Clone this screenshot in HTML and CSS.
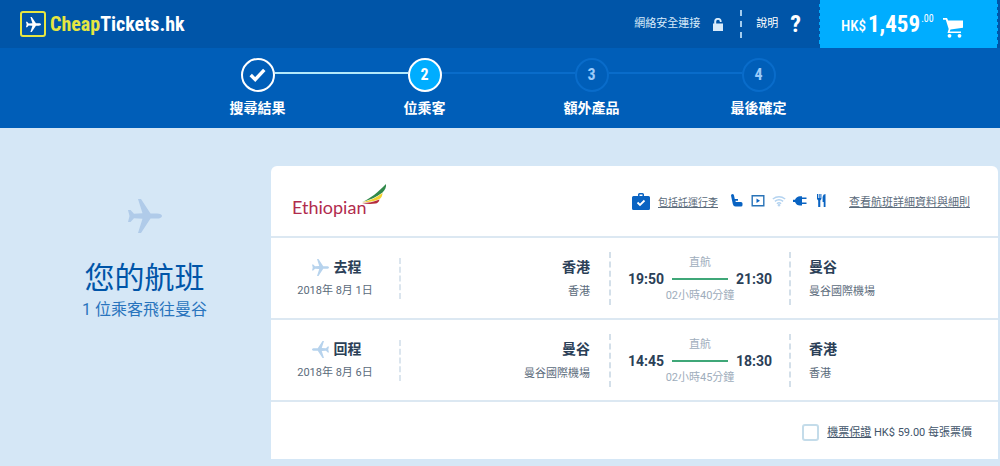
FILE: index.html
```
<!DOCTYPE html>
<html lang="zh-Hant">
<head>
<meta charset="utf-8">
<meta name="viewport" content="width=device-width, initial-scale=1">
<title>CheapTickets.hk</title>
<link rel="stylesheet" href="styles.css">
</head>
<body>
<svg class="sprite" aria-hidden="true">
  <symbol id="plane" viewBox="0 0 34 34"><path d="M34 17c0 1.500-2 2.600-5 2.600h-6.500L13 34h-3l4.500-14.200-8.500-.5L2.500 23H0l1.500-6L0 11h2.500L6 14.700l8.500-.5L10 0h3l9.500 14.400H29c3 0 5 1.100 5 2.600z"/></symbol>
</svg>
<header class="topbar">
  <a class="brand" href="#" aria-label="CheapTickets.hk">
    <span class="brand-mark"><svg><use href="#plane"/></svg></span>
    <span class="brand-name"><span class="brand-cheap">Cheap</span>Tickets.hk</span>
  </a>
  <div class="secure">
    <span>網絡安全連接</span>
    <svg class="lock" viewBox="0 0 10 13"><path d="M0 5.500h1.200V3.600a3.600 3.600 0 0 1 7.400 0V4H6.800v-.4a1.800 1.800 0 0 0-3.600 0v1.900H10V13H0z"/></svg>
  </div>
  <a class="help" href="#">說明 <span class="help-mark">?</span></a>
  <button class="cart" type="button">
    <span class="cart-currency">HK$</span><span class="cart-total">1,459</span><span class="cart-cents">.00</span>
    <svg class="cart-icon" viewBox="0 0 20 20"><path d="M0 0h4l1.200 2.500H20v7.200L7.500 11.500l-.8 2H18V15H4.500l1.200-4L2.800 1.800H0z"/><circle cx="6.500" cy="17.800" r="1.900"/><circle cx="16.500" cy="17.800" r="1.900"/></svg>
  </button>
</header>
<nav class="progress" aria-label="預訂步驟">
  <ol class="steps">
    <li class="step done"><span class="dot"><svg class="tick" viewBox="0 0 15 12"><path d="M1.500 6l4 4 8-8.500"/></svg></span><span>搜尋結果</span></li>
    <li class="step current"><span class="dot">2</span><span>位乘客</span></li>
    <li class="step"><span class="dot">3</span><span>額外產品</span></li>
    <li class="step"><span class="dot">4</span><span>最後確定</span></li>
  </ol>
</nav>
<main class="page">
  <section class="intro">
    <svg class="intro-plane"><use href="#plane"/></svg>
    <h1 class="intro-title">您的航班</h1>
    <p class="intro-sub">1 位乘客飛往曼谷</p>
  </section>
  <section class="card">
    <div class="card-head">
      <div class="airline">
        <span>Ethiopian</span>
        <svg class="airline-tail" viewBox="0 0 26 22"><path fill="#31894a" d="M1 18C9 15 17 8 25 0c.5 3-1 6-3.500 8.500C16 13 9 16 1 18z"/><path fill="#f3d22f" d="M1 18.500c8-2 15-5 20.500-9.500 0 2.500-1 5-3 6-5 2.500-11 3-17.500 3.500z"/><path fill="#b52b3c" d="M1 19c6 0 12-1 17.500-3.500-.5 2.500-2 3.800-4 4-5 .8-9 .5-13.500-.5z"/></svg>
      </div>
      <div class="baggage">
        <svg class="bag" viewBox="0 0 18 17"><path fill="#0963c2" fill-rule="evenodd" d="M6 3V1.500Q6 0 7.500 0h3Q12 0 12 1.500V3h4.500Q18 3 18 4.500v11q0 1.500-1.500 1.500h-15Q0 17 0 15.500v-11Q0 3 1.500 3zm1.500 0h3V1.500h-3z"/><path d="M5.500 9.500L8 12l4.500-4.500" fill="none" stroke="#fff" stroke-width="1.800"/></svg>
        <a href="#">包括託運行李</a>
      </div>
      <div class="amenities">
        <svg class="amenity" viewBox="0 0 14 14"><path d="M1 1.500Q1 0 2.500 0T4 1.500L4.800 5H8v1.800H5.400L5.800 8H11q1.500 0 1.500 1.500V11Q12.500 12.500 11 12.500H5.500Q3.500 12.500 2.800 10z"/></svg>
        <svg class="amenity" viewBox="0 0 14 14"><path d="M1.200 1.700h11.600v10H1.200z" fill="none" stroke="#2873b8" stroke-width="1.400"/><path d="M5.500 4.500L9 6.700 5.500 9z"/></svg>
        <svg class="amenity off" viewBox="0 0 14 14"><g fill="none" stroke-width="1.500"><path d="M.8 5Q7 .5 13.200 5"/><path d="M2.900 7.400q4.100-3.300 8.200 0"/><path d="M4.900 9.700q2.100-1.800 4.200 0"/></g><circle cx="7" cy="11.200" r=".9"/></svg>
        <svg class="amenity" viewBox="0 0 14 14"><path d="M0 5.800h2Q3.500 2.200 7 2.200h2V3.500h4.500V5H9v3.500h4.500V10H9v1.500H7Q3.500 11.500 2 8H0z"/></svg>
        <svg class="amenity" viewBox="0 0 14 14"><path d="M3 0h1v4h.7V0h1v4h.7V0h1v5L6.300 6.500V13H4.200V6.500L3 5zM11.500 0v13H9.700V8H8.600V3Q9 .2 11.500 0z"/></svg>
      </div>
      <a class="details" href="#">查看航班詳細資料與細則</a>
    </div>
    <article class="flight">
      <div class="leg"><p class="leg-name"><svg class="leg-plane"><use href="#plane"/></svg>去程</p><p>2018年 8月 1日</p></div>
      <div class="place from"><h2>香港</h2><p>香港</p></div>
      <div class="times"><span class="stops">直航</span><time>19:50</time><span class="line"></span><time>21:30</time><span class="duration">02小時40分鐘</span></div>
      <div class="place"><h2>曼谷</h2><p>曼谷國際機場</p></div>
    </article>
    <article class="flight">
      <div class="leg"><p class="leg-name"><svg class="leg-plane back"><use href="#plane"/></svg>回程</p><p>2018年 8月 6日</p></div>
      <div class="place from"><h2>曼谷</h2><p>曼谷國際機場</p></div>
      <div class="times"><span class="stops">直航</span><time>14:45</time><span class="line"></span><time>18:30</time><span class="duration">02小時45分鐘</span></div>
      <div class="place"><h2>香港</h2><p>香港</p></div>
    </article>
    <div class="card-foot">
      <input class="check" type="checkbox" id="guarantee">
      <label for="guarantee"><u>機票保證</u> HK$ 59.00 每張票價</label>
    </div>
  </section>
</main>
</body>
</html>
```
FILE: styles.css
```
* { box-sizing: border-box; }
body {
  margin: 0;
  background: #d5e7f6;
  color: #5b6b7b;
  font: 11px/16px Roboto, "Noto Sans CJK TC", sans-serif;
}
h1, h2, p, ol { margin: 0; padding: 0; }
a { color: inherit; }
svg { display: block; fill: currentColor; flex: none; }
.sprite { position: absolute; width: 0; height: 0; }

.topbar {
  display: flex;
  align-items: center;
  height: 48px;
  padding: 0 2px 0 20px;
  background: #0055a8;
  color: #fff;
}
.brand {
  display: flex;
  align-items: center;
  gap: 4px;
  margin-right: auto;
  text-decoration: none;
}
.brand-mark {
  display: grid;
  place-items: center;
  width: 26px;
  height: 26px;
  border: 2px solid #e6e641;
  border-radius: 3px;
}
.brand-mark svg { width: 15px; height: 15px; }
.brand-name, .help-mark, .cart, .dot {
  font-family: "Roboto Condensed", "Open Sans Condensed", "Liberation Sans Narrow", Roboto, sans-serif;
  font-weight: 700;
}
.brand-name { font-size: 20px; line-height: 26px; }
.brand-cheap { color: #e6e641; }
.secure {
  display: flex;
  align-items: center;
  gap: 13px;
  padding-right: 17px;
  color: #d9ebfa;
}
.lock { width: 10px; height: 13px; }
.help {
  display: flex;
  align-items: center;
  gap: 12px;
  height: 28px;
  padding: 0 18px 0 14px;
  border-left: 2px dashed #a4cdef;
  text-decoration: none;
}
.help-mark { font-size: 24px; }
.cart {
  position: relative;
  display: flex;
  align-items: center;
  align-self: stretch;
  width: 179px;
  padding: 0 0 0 22px;
  border: 0;
  background: #00adff;
  color: #fff;
}
.cart::before, .cart::after {
  content: "";
  position: absolute;
  top: 0;
  bottom: 0;
  left: -2px;
  border-left: 3px dotted #0055a8;
}
.cart::after { left: auto; right: -2px; }
.cart-currency { margin: 4px 2px 0 0; font-size: 15px; font-weight: 500; }
.cart-total { font-size: 23px; }
.cart-cents { margin: 0 9px 12px 1px; font-size: 10px; font-weight: 400; }
.cart-icon { width: 20px; height: 20px; margin-top: 8px; }

.progress { padding: 10px 0 10px 16px; background: #005eb8; }
.steps {
  display: grid;
  grid-template-columns: repeat(4, 1fr);
  width: 68%;
  max-width: 668px;
  margin: 0 auto;
  list-style: none;
}
.step {
  position: relative;
  display: grid;
  justify-items: center;
  gap: 6px;
  color: #fff;
  font-size: 14px;
  font-weight: 700;
  line-height: 20px;
}
.step + .step::before {
  content: "";
  position: absolute;
  top: 14px;
  left: calc(-50% + 17px);
  width: calc(100% - 34px);
  height: 2px;
  background: #096cca;
}
.step.current::before { background: #b3e9fb; }
.dot {
  display: grid;
  place-items: center;
  width: 34px;
  height: 34px;
  border: 2px solid #096cca;
  border-radius: 50%;
  color: #9bcbfa;
  font-size: 16px;
}
.done .dot, .current .dot { border-color: #fff; color: #fff; }
.current .dot { background: #00adff; }
.tick { width: 17px; height: 14px; fill: none; stroke: #fff; stroke-width: 3; }

.page {
  display: grid;
  grid-template-columns: 271fr 727fr;
  padding: 38px 2px 7px 0;
}
.intro { padding: 33px 0 0 18px; text-align: center; }
.intro-plane { width: 34px; height: 34px; margin: 0 auto 23px; color: #b0cbe9; }
.intro-title { color: #0055a8; font-size: 30px; font-weight: 400; line-height: 44px; }
.intro-sub { color: #2874bd; font-size: 16px; font-weight: 400; line-height: 20px; }

.card { border-radius: 6px 6px 0 0; background: #fff; }
.card-head {
  display: flex;
  align-items: center;
  height: 72px;
  padding: 0 28px 0 21px;
  border-bottom: 2px solid #dce8f2;
}
.airline {
  position: relative;
  margin: 12px auto 0 0;
  color: #b12c4e;
  font: 18px/20px Lato, sans-serif;
}
.airline-tail { position: absolute; left: 69px; top: -13px; width: 26px; height: 22px; }
.baggage { display: flex; align-items: center; gap: 8px; font-size: 10px; }
.bag { width: 18px; height: 17px; }
.amenities { display: flex; gap: 7px; margin: 0 21px 0 12px; color: #0963c2; }
.amenity { width: 14px; height: 14px; }
.off { color: #b4d3f0; stroke: #b4d3f0; }
.baggage a, .details { padding-top: 3px; }

.flight {
  display: grid;
  grid-template-columns: 130fr 208fr 182fr 207fr;
  align-items: center;
  padding: 14px 0 13px;
  border-bottom: 2px solid #dce8f2;
}
.leg { border-right: 2px dashed #dbe5ee; text-align: center; }
.leg-name, .place h2 {
  margin-bottom: 6px;
  color: #2b4057;
  font-size: 14px;
  font-weight: 700;
  line-height: 18px;
}
.leg p + p { padding-top: 1px; }
.leg-name { display: flex; align-items: center; justify-content: center; gap: 5px; padding-left: 3px; }
.leg-plane { width: 17px; height: 17px; color: #b7d3ed; }
.back { transform: scaleX(-1); }
.place { padding: 0 18px; }
.place p { padding-top: 2px; }
.from { padding-right: 19px; text-align: right; }
.times {
  display: grid;
  grid-template-columns: 1fr 56px 1fr;
  align-items: center;
  row-gap: 1px;
  column-gap: 8px;
  padding-top: 3px;
  border: dashed #d3dfe9;
  border-width: 0 2px;
  text-align: center;
  color: #9eadbc;
}
.times time { color: #2b4057; font-size: 14px; font-weight: 700; line-height: 14px; text-align: right; }
.line + time { text-align: left; }
.stops, .duration { grid-column: 1 / -1; }
.stops { line-height: 16px; }
.duration { line-height: 18px; }
.line { height: 2px; background: #3fa778; }

.card-foot {
  display: flex;
  align-items: center;
  justify-content: flex-end;
  gap: 8px;
  padding: 22px 26px 18px;
  color: #41546a;
}
.check {
  appearance: none;
  width: 17px;
  height: 17px;
  margin: 0;
  border: 2px solid #c4dcea;
  border-radius: 3px;
  background: #fff;
}
```
